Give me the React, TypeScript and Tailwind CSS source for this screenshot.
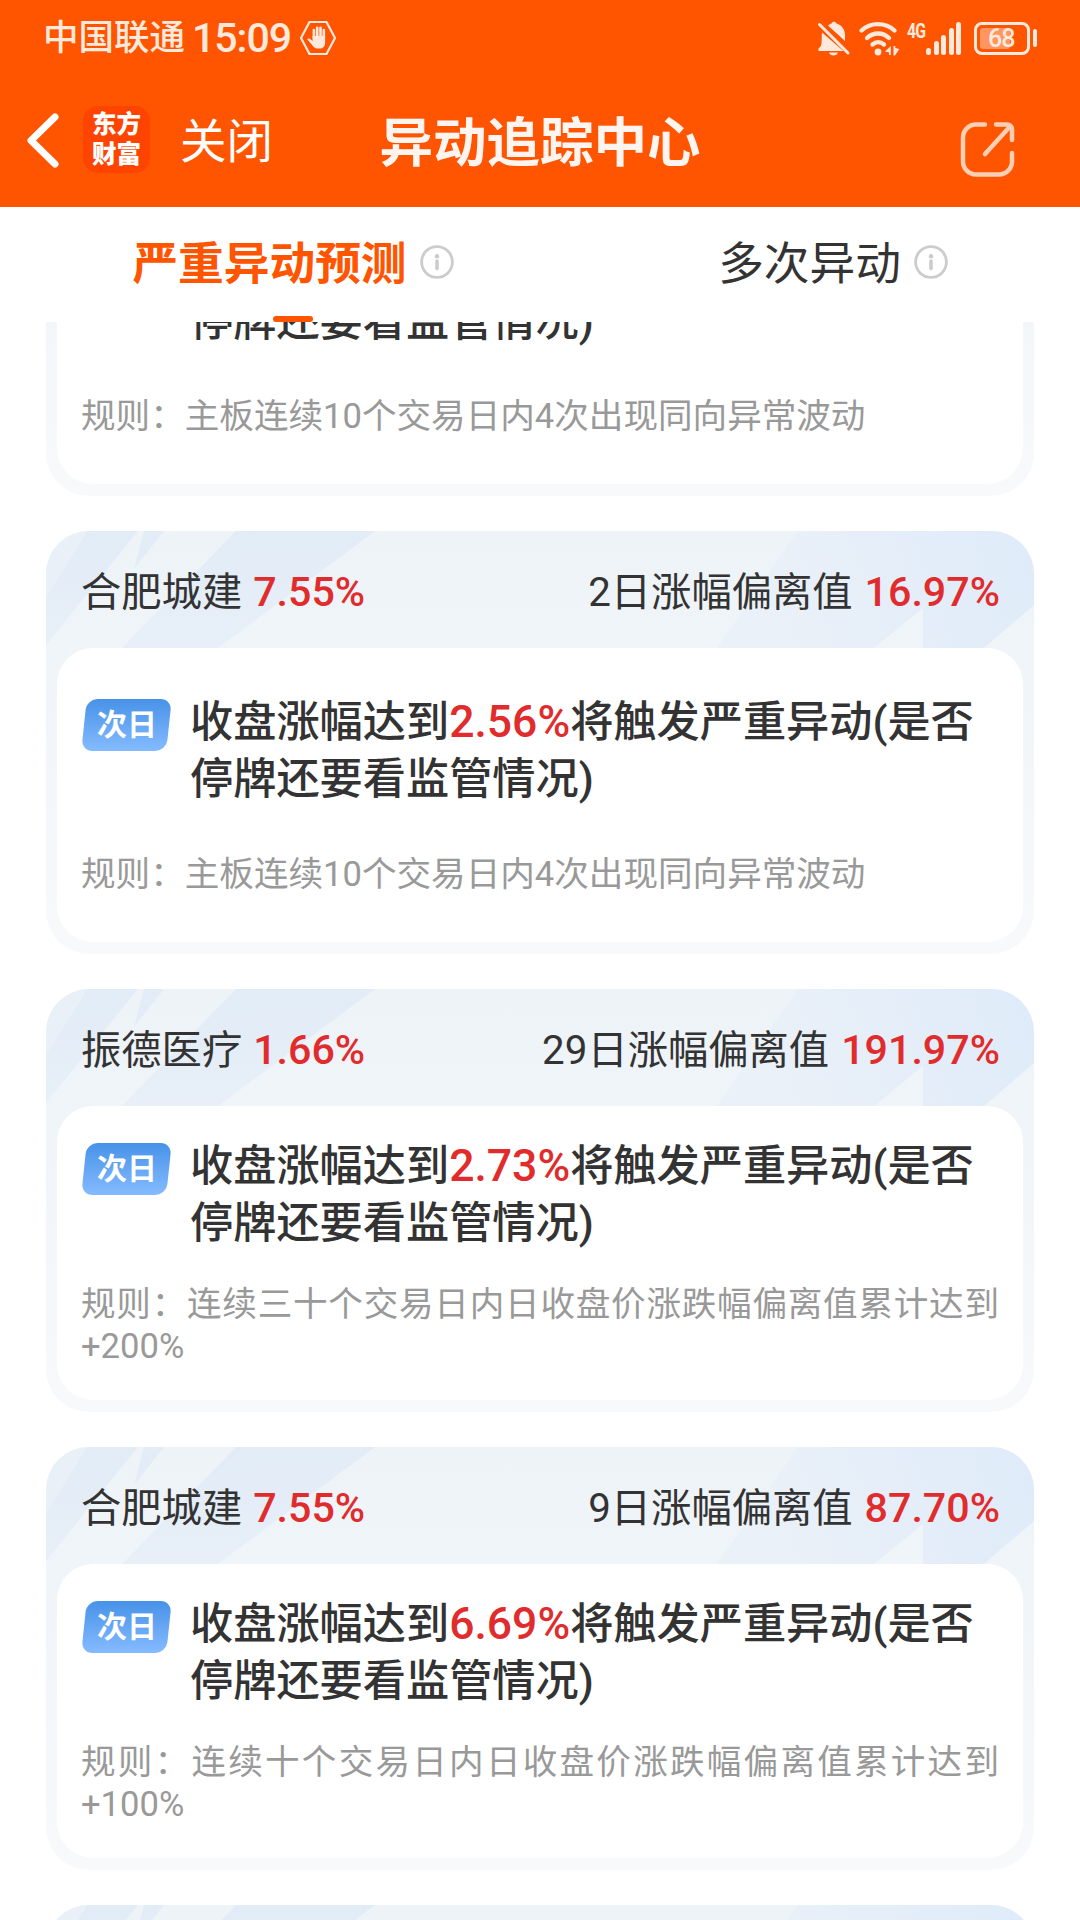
import type { ReactNode } from "react";

interface Notice {
  name: string;
  change: string;
  label: string;
  deviation: string;
  trigger: string;
  rule: string;
}

const notices: Notice[] = [
  {
    name: "合肥城建",
    change: "7.55%",
    label: "2日涨幅偏离值",
    deviation: "16.97%",
    trigger: "2.56%",
    rule: "主板连续10个交易日内4次出现同向异常波动",
  },
  {
    name: "合肥城建",
    change: "7.55%",
    label: "2日涨幅偏离值",
    deviation: "16.97%",
    trigger: "2.56%",
    rule: "主板连续10个交易日内4次出现同向异常波动",
  },
  {
    name: "振德医疗",
    change: "1.66%",
    label: "29日涨幅偏离值",
    deviation: "191.97%",
    trigger: "2.73%",
    rule: "连续三十个交易日内日收盘价涨跌幅偏离值累计达到+200%",
  },
  {
    name: "合肥城建",
    change: "7.55%",
    label: "9日涨幅偏离值",
    deviation: "87.70%",
    trigger: "6.69%",
    rule: "连续十个交易日内日收盘价涨跌幅偏离值累计达到+100%",
  },
  {
    name: "合肥城建",
    change: "7.55%",
    label: "9日涨幅偏离值",
    deviation: "87.70%",
    trigger: "6.69%",
    rule: "连续十个交易日内日收盘价涨跌幅偏离值累计达到+100%",
  },
];

function StatusBar() {
  return (
    <div className="flex h-[76px] items-center justify-between pl-[43px] pr-[43px] text-[#ffe9dc]">
      <div className="flex items-center">
        <span className="pt-[2px] text-[35.5px] font-medium leading-none">中国联通</span>
        <span className="ml-[7px] w-[98px] whitespace-nowrap text-[41px] font-medium leading-none tracking-[-1px]">15:09</span>
        <svg className="ml-[9px] h-[36px] w-[38px]" viewBox="0 0 38 36" fill="none">
          <path d="M10.5 2h17L36 18l-8.500 16h-17L2 18z" stroke="currentColor" strokeWidth="2.200" strokeLinejoin="round" />
          <path d="M14.900 18V10M18.200 17V7.800M21.500 17V7.800M24.800 18V10" stroke="currentColor" strokeWidth="2.600" strokeLinecap="round" />
          <path d="M13.600 16h12.500v7c0 3-2 5.500-5 5.500h-2.500c-2.500 0-4-1.500-5.500-3.500l-4.800-5.500c.8-1.400 2.500-1 3.500 0l1.800 1.500z" fill="currentColor" />
        </svg>
      </div>
      <div className="flex items-center">
        <svg className="h-[36px] w-[34px]" viewBox="0 0 34 36" fill="currentColor">
          <path d="M5 12.500 26.500 31H1.500v-2.500L4 26c1-3 .5-8 1-13.500z" />
          <path d="M11 5.500c1.500-1.300 2.500-1.600 3.500-2 1-2.200 4-2.200 5 0 5.500 2 8.500 6 8.500 11.500v6z" />
          <path d="M12 32.500h9c-1 4-8 4-9 0z" />
          <path d="M2.500 4.500 31 33" stroke="currentColor" strokeWidth="3" strokeLinecap="round" />
        </svg>
        <svg className="ml-[7px] h-[36px] w-[42px]" viewBox="0 0 42 36" fill="none" stroke="currentColor" strokeWidth="4.300" strokeLinecap="round">
          <path d="M3.500 10.500c9-8.500 24-8.500 33 0" />
          <path d="M9 18c6.500-6 16-6 22 0" />
          <path d="M14.500 24.500c3.500-3 8-3 11.500 0" />
          <circle cx="20" cy="32" r="3.400" fill="currentColor" stroke="none" />
          <path d="M32.800 26v9h-1.800v-2.500L27 31.500zM35.500 26h1.800v2l4 1L37 35.500h-1.500z" fill="currentColor" stroke="none" />
        </svg>
        <span className="ml-[7px] w-[19px] origin-left self-start pt-[1px] text-[21px] font-bold leading-none tracking-[-1px] [transform:scaleX(0.75)]">
          4G
        </span>
        <div className="flex h-[34px] items-end gap-[2.800px]">
          <i className="h-[7px] w-[4.700px] rounded-full bg-current" />
          <i className="h-[14px] w-[4.700px] rounded-full bg-current" />
          <i className="h-[20px] w-[4.700px] rounded-full bg-current" />
          <i className="h-[27px] w-[4.700px] rounded-full bg-current" />
          <i className="h-[33px] w-[4.700px] rounded-full bg-current" />
        </div>
        <div className="ml-[13px] flex h-[33px] w-[56px] items-center rounded-[8px] border-[3px] border-current p-[3px]">
          <div className="h-full w-[30px] shrink-0 rounded-[3px] bg-[#ff9560]" />
          <span className="-ml-[22px] text-[25px] font-medium leading-none tracking-[-1px]">68</span>
        </div>
        <i className="ml-[3px] h-[18px] w-[4px] rounded-full bg-current" />
      </div>
    </div>
  );
}

function NavBar() {
  return (
    <div className="relative flex h-[131px] items-center text-white">
      <svg className="-mt-[4px] ml-[24px] h-[60px] w-[38px]" viewBox="0 0 38 60" fill="none">
        <path d="M31 7 7 30.500 31 54" stroke="currentColor" strokeWidth="7" strokeLinecap="round" strokeLinejoin="round" />
      </svg>
      <div className="-mt-[4px] ml-[21px] flex h-[67px] w-[67px] flex-col items-center justify-center rounded-[15px] bg-[#ff4400] text-[24.500px] font-black leading-[29.500px]">
        <span>东方</span>
        <span>财富</span>
      </div>
      <span className="ml-[30px] pt-[2px] text-[46.500px] leading-none">关闭</span>
      <h1 className="absolute inset-x-0 pt-[4px] text-center text-[53.500px] font-bold leading-none text-[#fff5f0]">异动追踪中心</h1>
      <svg className="ml-auto mr-[63px] mt-[14px] h-[58px] w-[58px] text-[#ffcfb5]" viewBox="0 0 58 58" fill="none" stroke="currentColor" strokeWidth="4.500" strokeLinecap="round" strokeLinejoin="round">
        <path d="M26 4.500H17a13 13 0 0 0-13 13v24a13 13 0 0 0 13 13h23a13 13 0 0 0 13-13V33" />
        <path d="M37 4.500h11a5 5 0 0 1 5 5V20" />
        <path d="M51 6.500 26 34" />
      </svg>
    </div>
  );
}

function InfoIcon() {
  return (
    <svg className="-mt-[2px] h-[34px] w-[34px]" viewBox="0 0 34 34" fill="none">
      <circle cx="17" cy="17" r="15.400" stroke="#ccc" strokeWidth="2.800" />
      <circle cx="17" cy="11.300" r="2.200" fill="#ccc" />
      <path d="M17 16v7.500" stroke="#ccc" strokeWidth="3.600" strokeLinecap="round" />
    </svg>
  );
}

function Tab({ active, children }: { active?: boolean; children: ReactNode }) {
  return (
    <div className="relative flex flex-1 justify-center pt-[33px]">
      {/* left pad balances the info icon so the label stays centred */}
      <div className="flex h-[46px] items-center gap-[13px] pl-[46px]">
        <span
          className={
            active
              ? "pt-[4px] text-[45.700px] font-bold leading-none text-[#ff5500]"
              : "pt-[4px] text-[45.700px] leading-none text-[#333]"
          }
        >
          {children}
        </span>
        <InfoIcon />
      </div>
      {active && <i className="absolute bottom-0 left-[273px] h-[6px] w-[40px] rounded-full bg-[#ff5500]" />}
    </div>
  );
}

function CardPattern() {
  return (
    <svg className="absolute inset-0 h-full w-full" viewBox="0 0 988 423" preserveAspectRatio="none">
      <defs>
        <linearGradient id="streak" x1="0" y1="0" x2="0" y2="150" gradientUnits="userSpaceOnUse">
          <stop offset="0" stopColor="#e2ecf6" />
          <stop offset="1" stopColor="#e9f0f9" />
        </linearGradient>
        <linearGradient id="corner" x1="720" y1="120" x2="988" y2="20" gradientUnits="userSpaceOnUse">
          <stop offset="0" stopColor="#ebf1f8" />
          <stop offset="1" stopColor="#dfebf9" />
        </linearGradient>
      </defs>
      <path d="M41 0H92L0 114V66ZM98 0H118L88 38ZM190 0H329L172 117H76Z" fill="url(#streak)" />
      <path d="M752 0H988V74L938 117H877V77L828 117H671Z" fill="url(#corner)" />
      <path d="M0 0H41L0 66Z" fill="#e9f0f7" />
    </svg>
  );
}

function NoticeCard({ notice }: { notice: Notice }) {
  return (
    <section className="relative flex h-[423px] shrink-0 flex-col overflow-hidden rounded-[43px] bg-linear-to-b from-[#eef3f8] via-[#f1f6fa] to-[#f8f9fb] px-[11px] pb-[12px]">
      <CardPattern />
      <div className="relative flex h-[117px] shrink-0 items-center justify-between pl-[24px] pr-[23px] pt-[6px] text-[40.300px] leading-none text-[#333]">
        <div>
          {notice.name}
          <span className="ml-[11px] text-[41.200px] font-medium leading-none text-[#e02c2c]">{notice.change}</span>
        </div>
        <div>
          {notice.label}
          <span className="ml-[12px] text-[41.200px] font-medium leading-none text-[#e02c2c]">{notice.deviation}</span>
        </div>
      </div>
      <div className="relative flex flex-1 flex-col justify-evenly rounded-[36px] bg-white pb-[1px] pl-[24px] pr-[24px]">
        <div className="flex items-start">
          <div className="mt-[5px] flex h-[52px] w-[90px] shrink-0 items-center justify-center">
            <div className="flex h-full w-[85px] -skew-x-6 items-center justify-center rounded-[11px] bg-linear-to-b from-[#4792e8] to-[#84bbff]">
              <span className="skew-x-6 text-[30px] font-bold leading-none text-white">次日</span>
            </div>
          </div>
          <p className="ml-[19px] text-[43.200px] font-medium leading-[57.300px] text-[#333]">
            收盘涨幅达到<span className="text-[44.500px] leading-none text-[#e02c2c]">{notice.trigger}</span>
            将触发严重异动(是否
            <br />
            停牌还要看监管情况)
          </p>
        </div>
        <p className="text-justify text-[34.600px] leading-[41.500px] text-[#999]">规则：{notice.rule}</p>
      </div>
    </section>
  );
}

export default function App() {
  return (
    <div className="flex h-[1920px] w-[1080px] flex-col overflow-hidden bg-white font-[Roboto,'Noto_Sans_CJK_SC',sans-serif]" lang="zh-CN">
      <header className="shrink-0 bg-[#ff5500]">
        <StatusBar />
        <NavBar />
      </header>
      <nav className="flex h-[115px] shrink-0">
        <Tab active>严重异动预测</Tab>
        <Tab>多次异动</Tab>
      </nav>
      <main className="flex-1 overflow-hidden px-[46px]">
        {/* list is scrolled, the first card is cut by the tab bar */}
        <div className="-mt-[249px] flex flex-col gap-[35px]">
          {notices.map((notice, i) => (
            <NoticeCard key={i} notice={notice} />
          ))}
        </div>
      </main>
    </div>
  );
}
